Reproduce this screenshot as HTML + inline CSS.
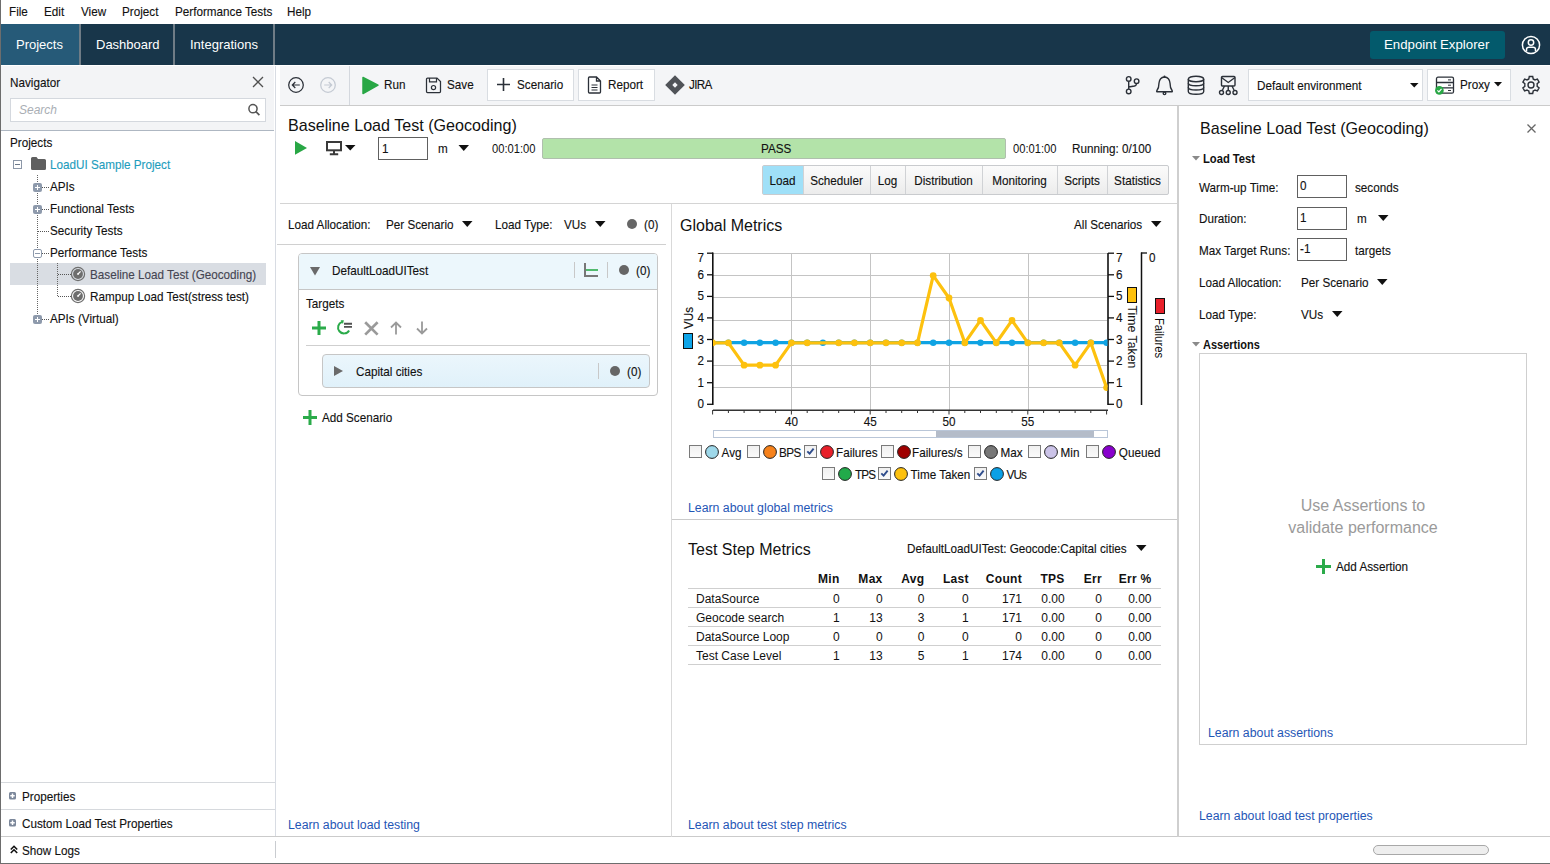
<!DOCTYPE html>
<html><head><meta charset="utf-8">
<style>
*{box-sizing:border-box;margin:0;padding:0}
html,body{width:1550px;height:864px;overflow:hidden;background:#fff;font-family:"Liberation Sans",sans-serif;color:#111;font-size:12px}
.a{position:absolute}
.t{position:absolute;white-space:nowrap;line-height:20px;height:20px}
.hl{position:absolute;height:1px}
.vl{position:absolute;width:1px}
.lnk{color:#1f56b6}
svg{position:absolute;overflow:visible}
.t[style*="font-size:11.7px"]{transform:scaleY(1.12);transform-origin:0 14px;-webkit-text-stroke:0.12px currentColor}
</style></head><body>
<!-- outer left border -->
<div class="a" style="left:0;top:0;width:1px;height:864px;background:#6d6d6d"></div>
<!-- MENU -->
<div class="t" style="left:9px;top:2px;font-size:11.7px">File</div>
<div class="t" style="left:44px;top:2px;font-size:11.7px">Edit</div>
<div class="t" style="left:81px;top:2px;font-size:11.7px">View</div>
<div class="t" style="left:122px;top:2px;font-size:11.7px">Project</div>
<div class="t" style="left:175px;top:2px;font-size:11.7px">Performance Tests</div>
<div class="t" style="left:287px;top:2px;font-size:11.7px">Help</div>
<!-- NAV BAR -->
<div class="a" style="left:1px;top:24px;width:1549px;height:41px;background:#18364a"></div>
<div class="a" style="left:1px;top:24px;width:78px;height:41px;background:#265a78"></div>
<div class="a" style="left:79px;top:24px;width:2px;height:41px;background:#6f7c86"></div>
<div class="a" style="left:173px;top:24px;width:2px;height:41px;background:#6f7c86"></div>
<div class="a" style="left:273px;top:24px;width:2px;height:41px;background:#6f7c86"></div>
<div class="t" style="left:16px;top:35px;font-size:13px;color:#fff">Projects</div>
<div class="t" style="left:96px;top:35px;font-size:13px;color:#fff">Dashboard</div>
<div class="t" style="left:190px;top:35px;font-size:13px;color:#fff">Integrations</div>
<div class="a" style="left:1370px;top:31px;width:135px;height:28px;background:#035a6c;border-radius:3px"></div>
<div class="t" style="left:1384px;top:35px;font-size:13.25px;color:#fff">Endpoint Explorer</div>

<!-- LEFT PANEL -->
<div class="a" style="left:1px;top:66px;width:273px;height:64px;background:#f3f4f6"></div>
<div class="hl" style="left:1px;top:130px;width:273px;background:#aeb7c2;height:1px"></div>
<div class="vl" style="left:275px;top:66px;height:771px;background:#d8dce3;width:1px"></div>
<div class="t" style="left:10px;top:73px;font-size:11.7px">Navigator</div>
<div class="a" style="left:10px;top:98px;width:256px;height:24px;background:#fff;border:1px solid #d4d8de"></div>
<div class="t" style="left:19px;top:100px;font-size:12px;color:#a9aeb4;font-style:italic">Search</div>


<svg style="left:252px;top:76px" width="12" height="12"><path d="M1 1 L11 11 M11 1 L1 11" stroke="#505050" stroke-width="1.3"/></svg>
<svg style="left:247px;top:103px" width="14" height="14"><circle cx="6" cy="5.7" r="4.1" fill="none" stroke="#555" stroke-width="1.5"/><path d="M8.9 8.6 L12.4 12.1" stroke="#555" stroke-width="1.7"/></svg>
<!-- TOOLBAR -->
<div class="a" style="left:280px;top:66px;width:1270px;height:39px;background:#f4f5f7"></div>
<div class="hl" style="left:280px;top:105px;width:1270px;background:#cbcbcb;height:1px"></div>


<!-- TREE -->
<div class="t" style="left:10px;top:133px;font-size:11.7px">Projects</div>
<div class="a" style="left:13px;top:160px;width:9px;height:9px;border:1px solid #8c97a8;background:#fff"></div>
<div class="a" style="left:15px;top:164px;width:5px;height:1px;background:#6c788a"></div>
<svg style="left:31px;top:157px" width="15" height="13"><path d="M0 1.5 Q0 0 1.5 0 H5.5 L7 2 H13.5 Q15 2 15 3.5 V11.5 Q15 13 13.5 13 H1.5 Q0 13 0 11.5Z" fill="#5f5f5f"/></svg>
<div class="t" style="left:50px;top:155px;font-size:11.7px;color:#1d9dbd">LoadUI Sample Project</div>
<!-- dotted lines -->
<div class="a" style="left:10px;top:263px;width:256px;height:22px;background:#d9dde3"></div>

<div class="a" style="left:37px;top:175px;width:1px;height:144px;background:repeating-linear-gradient(to bottom,#666 0 1px,transparent 1px 2px)"></div>
<div class="a" style="left:57px;top:263px;width:1px;height:34px;background:repeating-linear-gradient(to bottom,#666 0 1px,transparent 1px 2px)"></div>
<div class="a" style="left:38px;top:187px;width:12px;height:1px;background:repeating-linear-gradient(to right,#555 0 1px,transparent 1px 2px)"></div>
<div class="a" style="left:33px;top:183px;width:9px;height:9px;border-radius:2px;background:#8e9aac"></div><div class="a" style="left:35px;top:187px;width:5px;height:1px;background:#fff"></div><div class="a" style="left:37px;top:185px;width:1px;height:5px;background:#fff"></div>
<div class="t" style="left:50px;top:177px;font-size:11.7px">APIs</div>
<div class="a" style="left:38px;top:209px;width:12px;height:1px;background:repeating-linear-gradient(to right,#555 0 1px,transparent 1px 2px)"></div>
<div class="a" style="left:33px;top:205px;width:9px;height:9px;border-radius:2px;background:#8e9aac"></div><div class="a" style="left:35px;top:209px;width:5px;height:1px;background:#fff"></div><div class="a" style="left:37px;top:207px;width:1px;height:5px;background:#fff"></div>
<div class="t" style="left:50px;top:199px;font-size:11.7px">Functional Tests</div>
<div class="a" style="left:38px;top:231px;width:12px;height:1px;background:repeating-linear-gradient(to right,#555 0 1px,transparent 1px 2px)"></div>
<div class="t" style="left:50px;top:221px;font-size:11.7px">Security Tests</div>
<div class="a" style="left:38px;top:253px;width:12px;height:1px;background:repeating-linear-gradient(to right,#555 0 1px,transparent 1px 2px)"></div>
<div class="a" style="left:33px;top:249px;width:9px;height:9px;border-radius:2px;border:1px solid #8e9aac;background:#fff"></div><div class="a" style="left:35px;top:253px;width:5px;height:1px;background:#8e9aac"></div>
<div class="t" style="left:50px;top:243px;font-size:11.7px">Performance Tests</div>
<div class="a" style="left:38px;top:319px;width:12px;height:1px;background:repeating-linear-gradient(to right,#555 0 1px,transparent 1px 2px)"></div>
<div class="a" style="left:33px;top:315px;width:9px;height:9px;border-radius:2px;background:#8e9aac"></div><div class="a" style="left:35px;top:319px;width:5px;height:1px;background:#fff"></div><div class="a" style="left:37px;top:317px;width:1px;height:5px;background:#fff"></div>
<div class="t" style="left:50px;top:309px;font-size:11.7px">APIs (Virtual)</div>
<div class="a" style="left:57px;top:263px;width:1px;height:34px;background:repeating-linear-gradient(to bottom,#666 0 1px,transparent 1px 2px)"></div>
<div class="a" style="left:58px;top:274px;width:13px;height:1px;background:repeating-linear-gradient(to right,#555 0 1px,transparent 1px 2px)"></div>
<svg style="left:70px;top:266px" width="16" height="16"><circle cx="8" cy="8" r="6.6" fill="none" stroke="#6e6e6e" stroke-width="1.2"/><circle cx="8" cy="8" r="4.9" fill="#6e6e6e"/><path d="M8 8 L10.6 5.4" stroke="#fff" stroke-width="1.2"/><rect x="7.2" y="7.2" width="1.6" height="1.6" fill="#fff"/></svg>
<div class="t" style="left:90px;top:265px;font-size:11.7px;color:#454552">Baseline Load Test (Geocoding)</div>
<div class="a" style="left:58px;top:296px;width:13px;height:1px;background:repeating-linear-gradient(to right,#555 0 1px,transparent 1px 2px)"></div>
<svg style="left:70px;top:288px" width="16" height="16"><circle cx="8" cy="8" r="6.6" fill="none" stroke="#6e6e6e" stroke-width="1.2"/><circle cx="8" cy="8" r="4.9" fill="#6e6e6e"/><path d="M8 8 L10.6 5.4" stroke="#fff" stroke-width="1.2"/><rect x="7.2" y="7.2" width="1.6" height="1.6" fill="#fff"/></svg>
<div class="t" style="left:90px;top:287px;font-size:11.7px;color:#111">Rampup Load Test(stress test)</div>

<!-- bottom left sections -->
<div class="hl" style="left:1px;top:782px;width:274px;background:#d6d9dd"></div>
<div class="hl" style="left:1px;top:809px;width:274px;background:#d6d9dd"></div>
<div class="hl" style="left:1px;top:836px;width:1549px;background:#cbcbcb"></div>
<svg style="left:9px;top:792px" width="7" height="8"><rect x="0" y="0" width="7" height="7.5" rx="1.5" fill="#7b879a"/><path d="M3.5 1.5 V6 M1.3 3.75 H5.7" stroke="#fff" stroke-width="1.5"/></svg>
<div class="t" style="left:22px;top:786.7px;font-size:11.7px">Properties</div>
<svg style="left:9px;top:819.2px" width="7" height="8"><rect x="0" y="0" width="7" height="7.5" rx="1.5" fill="#7b879a"/><path d="M3.5 1.5 V6 M1.3 3.75 H5.7" stroke="#fff" stroke-width="1.5"/></svg>
<div class="t" style="left:22px;top:813.7px;font-size:11.7px">Custom Load Test Properties</div>
<svg style="left:10px;top:845px" width="8" height="9"><path d="M0.8 4.5 L4 1.3 L7.2 4.5 M0.8 8 L4 4.8 L7.2 8" fill="none" stroke="#111" stroke-width="1.6"/></svg>
<div class="t" style="left:22px;top:841px;font-size:11.7px">Show Logs</div>
<div class="vl" style="left:275px;top:841px;height:17px;background:#c9ccd0"></div>
<div class="a" style="left:0;top:863px;width:1550px;height:1px;background:#6d6d6d"></div>

<!-- TOOLBAR ITEMS -->
<svg style="left:288px;top:77px" width="16" height="16"><circle cx="8" cy="8" r="7.3" fill="none" stroke="#2b3038" stroke-width="1.25"/><path d="M11.8 8 H4.3 M7.3 5 L4.3 8 L7.3 11" fill="none" stroke="#2b3038" stroke-width="1.2"/></svg>
<svg style="left:320px;top:77px" width="16" height="16"><circle cx="8" cy="8" r="7.3" fill="none" stroke="#c4cad3" stroke-width="1.25"/><path d="M4.2 8 H11.7 M8.7 5 L11.7 8 L8.7 11" fill="none" stroke="#c4cad3" stroke-width="1.2"/></svg>
<div class="vl" style="left:349px;top:66px;height:39px;background:#d4d8de"></div>
<svg style="left:362px;top:76px" width="17" height="19"><path d="M1 1.5 L16 9.2 L1 17.5 Z" fill="#28a745" stroke="#28a745" stroke-width="1.5" stroke-linejoin="round"/></svg>
<div class="t" style="left:384px;top:75px;font-size:11.7px">Run</div>
<svg style="left:425px;top:77px" width="17" height="17"><path d="M1.5 2 Q1.5 1 2.5 1 H12 L15.5 4.5 V14.5 Q15.5 15.5 14.5 15.5 H2.5 Q1.5 15.5 1.5 14.5Z" fill="none" stroke="#2b3038" stroke-width="1.25"/><path d="M4.5 1 V4.8 H11.5 V1" fill="none" stroke="#2b3038" stroke-width="1.2"/><circle cx="8.5" cy="10.6" r="2.1" fill="none" stroke="#2b3038" stroke-width="1.2"/></svg>
<div class="t" style="left:447px;top:75px;font-size:11.7px">Save</div>
<div class="a" style="left:487px;top:69px;width:87px;height:32px;background:#fff;border:1px solid #d9dde2"></div>
<svg style="left:496px;top:77px" width="15" height="15"><path d="M7.5 1 V14 M1 7.5 H14" stroke="#2b3038" stroke-width="1.6"/></svg>
<div class="t" style="left:517px;top:75px;font-size:11.7px">Scenario</div>
<div class="a" style="left:578px;top:69px;width:77px;height:32px;background:#fff;border:1px solid #d9dde2"></div>
<svg style="left:587px;top:76px" width="15" height="18"><path d="M1.5 2 Q1.5 1 2.5 1 H9.5 L13.5 5 V16 Q13.5 17 12.5 17 H2.5 Q1.5 17 1.5 16Z M9.5 1 V5 H13.5" fill="none" stroke="#2b3038" stroke-width="1.3"/><path d="M4.5 9 H10.5 M4.5 11.5 H10.5 M4.5 14 H10.5" stroke="#2b3038" stroke-width="1"/></svg>
<div class="t" style="left:608px;top:75px;font-size:11.7px">Report</div>
<svg style="left:665px;top:75px" width="20" height="20"><path d="M10 0.2 L19.8 10 L10 19.8 L0.2 10Z" fill="#505358"/><path d="M10 7.3 L12.7 10 L10 12.7 L7.3 10Z" fill="#f4f5f7"/></svg>
<div class="t" style="left:689px;top:75px;font-size:11.7px;letter-spacing:-0.7px">JIRA</div>

<svg style="left:1124px;top:75px" width="17" height="21"><g fill="none" stroke="#2b3038" stroke-width="1.4"><circle cx="4.7" cy="3.9" r="2.3"/><circle cx="12.6" cy="6.2" r="2.3"/><circle cx="4.7" cy="16.4" r="2.3"/><path d="M4.7 6.2 V14.1 M4.7 12 L10.5 11 Q12.4 10.5 12.6 8.5"/></g></svg>
<svg style="left:1155px;top:75px" width="19" height="21"><g fill="none" stroke="#2b3038" stroke-width="1.4"><path d="M9.5 2 Q4.5 2.5 4 8 Q4 13 1.8 15.8 Q1.3 16.8 2.5 16.8 H16.5 Q17.7 16.8 17.2 15.8 Q15 13 15 8 Q14.5 2.5 9.5 2Z"/><circle cx="9.5" cy="18.3" r="1.3"/></g><circle cx="9.5" cy="1.6" r="1" fill="#2b3038"/></svg>
<svg style="left:1187px;top:75px" width="18" height="21"><g fill="none" stroke="#2b3038" stroke-width="1.4"><ellipse cx="9" cy="4" rx="7.7" ry="2.8"/><path d="M1.3 4 V16.5 Q1.3 19.3 9 19.3 Q16.7 19.3 16.7 16.5 V4"/><path d="M1.3 8 Q1.3 10.8 9 10.8 Q16.7 10.8 16.7 8 M1.3 12.2 Q1.3 15 9 15 Q16.7 15 16.7 12.2"/></g></svg>
<svg style="left:1218px;top:75px" width="21" height="21"><g fill="none" stroke="#2b3038" stroke-width="1.4"><rect x="3.5" y="1.5" width="13.5" height="9.5" rx="1"/><path d="M3.5 2.5 L10.25 7.5 L17 2.5"/><path d="M10.25 11 V15.5 M6.5 11 L4.5 15 M14 11 L16 15"/><circle cx="3.5" cy="17.5" r="2"/><circle cx="10.25" cy="17.5" r="2"/><circle cx="17" cy="17.5" r="2"/></g></svg>

<div class="a" style="left:1248px;top:69px;width:175px;height:32px;background:#fff;border:1px solid #d9dde2"></div>
<div class="t" style="left:1257px;top:76px;font-size:11.7px">Default environment</div>
<svg style="left:1410px;top:83px" width="9" height="5"><path d="M0 0 H8.5 L4.25 4.5Z" fill="#111"/></svg>
<div class="a" style="left:1427px;top:69px;width:84px;height:32px;background:#fff;border:1px solid #d9dde2"></div>
<svg style="left:1435px;top:75.5px" width="21" height="20"><g fill="none" stroke="#2b3038" stroke-width="1.3"><rect x="1.5" y="1.2" width="17" height="16" rx="1.5"/><path d="M1.5 6.5 H18.5 M1.5 11.8 H18.5"/><path d="M13 3.9 H16 M13 9.2 H16 M13 14.5 H16" stroke-width="1"/></g><circle cx="4.4" cy="14.4" r="4.3" fill="#28a745"/><path d="M2.4 14.4 L3.9 15.9 L6.5 12.9" fill="none" stroke="#fff" stroke-width="1.2"/></svg>
<div class="t" style="left:1460px;top:75px;font-size:11.7px">Proxy</div>
<svg style="left:1494px;top:82px" width="9" height="5"><path d="M0 0 H8 L4 4.5Z" fill="#111"/></svg>
<svg style="left:1521px;top:75px" width="20" height="20"><path fill="none" stroke="#2b3038" stroke-width="1.4" d="M8.3 1.5 H11.7 L12.2 4 Q13.2 4.4 14 5 L16.4 4.1 L18.1 7.1 L16.1 8.7 Q16.3 10 16.1 11.3 L18.1 12.9 L16.4 15.9 L14 15 Q13.2 15.6 12.2 16 L11.7 18.5 H8.3 L7.8 16 Q6.8 15.6 6 15 L3.6 15.9 L1.9 12.9 L3.9 11.3 Q3.7 10 3.9 8.7 L1.9 7.1 L3.6 4.1 L6 5 Q6.8 4.4 7.8 4Z"/><circle cx="10" cy="10" r="3" fill="none" stroke="#2b3038" stroke-width="1.4"/></svg>
<svg style="left:1521px;top:35px" width="20" height="20"><g fill="none" stroke="#fff" stroke-width="1.5"><circle cx="10" cy="10" r="8.6"/><circle cx="10" cy="7.5" r="2.7"/><path d="M5.5 16.3 V14.5 Q5.5 12.3 8 12.3 H12 Q14.5 12.3 14.5 14.5 V16.3"/></g></svg>

<!-- MAIN HEADER -->
<div class="t" style="left:288px;top:115px;font-size:16.1px;color:#111">Baseline Load Test (Geocoding)</div>
<svg style="left:294px;top:140px" width="14" height="16"><path d="M1 1 L13 7.9 L1 14.8Z" fill="#28a745"/></svg>
<svg style="left:326px;top:141px" width="31" height="15"><g fill="none" stroke="#3a3a3a" stroke-width="2"><rect x="1" y="1" width="14" height="8.3"/><path d="M8 9.3 V12.5 M3.8 13.2 H12.2"/></g><path d="M19 4 H29.5 L24.25 9.6Z" fill="#111"/></svg>
<div class="a" style="left:378px;top:137px;width:50px;height:23px;border:1px solid #606060;background:#fff"></div>
<div class="t" style="left:382px;top:138.5px;font-size:11.7px">1</div>
<div class="t" style="left:438px;top:138.5px;font-size:11.7px">m</div>
<svg style="left:458px;top:145px" width="12" height="7"><path d="M0.5 0 H11 L5.75 6Z" fill="#111"/></svg>
<div class="t" style="left:492px;top:138.5px;font-size:11.2px;transform:scaleY(1.13);transform-origin:0 14px">00:01:00</div>
<div class="a" style="left:542px;top:138px;width:464px;height:21px;background:#b3e3a9;border:1px solid #b0bfae;border-radius:2px"></div>
<div class="t" style="left:761px;top:138.5px;font-size:11.7px">PASS</div>
<div class="t" style="left:1013px;top:138.5px;font-size:11.2px;transform:scaleY(1.13);transform-origin:0 14px">00:01:00</div>
<div class="t" style="left:1072px;top:138.5px;font-size:11.7px">Running: 0/100</div>
<!-- TABS -->
<div class="a" style="left:762px;top:165px;width:407px;height:30px;border:1px solid #c9cbce;border-radius:2px;background:linear-gradient(#fbfbfb,#ececec)"></div>
<div class="a" style="left:763px;top:166px;width:41px;height:28px;background:#9fe0f8"></div>
<div class="t" style="left:762px;width:41px;text-align:center;top:171px;font-size:11.7px">Load</div>
<div class="vl" style="left:803px;top:166px;height:28px;background:#d0d2d5"></div>
<div class="t" style="left:803px;width:67px;text-align:center;top:171px;font-size:11.7px">Scheduler</div>
<div class="vl" style="left:870px;top:166px;height:28px;background:#d0d2d5"></div>
<div class="t" style="left:870px;width:35px;text-align:center;top:171px;font-size:11.7px">Log</div>
<div class="vl" style="left:905px;top:166px;height:28px;background:#d0d2d5"></div>
<div class="t" style="left:905px;width:77px;text-align:center;top:171px;font-size:11.7px">Distribution</div>
<div class="vl" style="left:982px;top:166px;height:28px;background:#d0d2d5"></div>
<div class="t" style="left:982px;width:75px;text-align:center;top:171px;font-size:11.7px">Monitoring</div>
<div class="vl" style="left:1057px;top:166px;height:28px;background:#d0d2d5"></div>
<div class="t" style="left:1057px;width:50px;text-align:center;top:171px;font-size:11.7px">Scripts</div>
<div class="vl" style="left:1107px;top:166px;height:28px;background:#d0d2d5"></div>
<div class="t" style="left:1107px;width:61px;text-align:center;top:171px;font-size:11.7px">Statistics</div>

<div class="hl" style="left:280px;top:203px;width:898px;background:#d4d4d4"></div>
<div class="vl" style="left:1177px;top:106px;height:731px;background:#cfcfcf;width:2px"></div>
<div class="vl" style="left:671px;top:204px;height:633px;background:#d9d9d9"></div>

<!-- LOAD PANE -->
<div class="t" style="left:288px;top:215px;font-size:11.7px">Load Allocation:</div>
<div class="t" style="left:386px;top:215px;font-size:11.7px">Per Scenario</div>
<svg style="left:462px;top:221px" width="11" height="7"><path d="M0 0 H10.5 L5.25 6Z" fill="#111"/></svg>
<div class="t" style="left:495px;top:215px;font-size:11.7px">Load Type:</div>
<div class="t" style="left:564px;top:215px;font-size:11.7px">VUs</div>
<svg style="left:595px;top:221px" width="11" height="7"><path d="M0 0 H10.5 L5.25 6Z" fill="#111"/></svg>
<svg style="left:627px;top:219px" width="10" height="10"><circle cx="5" cy="5" r="5" fill="#666"/></svg>
<div class="t" style="left:644px;top:215px;font-size:11.7px">(0)</div>
<div class="hl" style="left:277px;top:244px;width:389px;background:#d0d0d0"></div>

<div class="a" style="left:298px;top:253px;width:360px;height:143px;border:1px solid #c6c6c6;border-radius:4px;background:#fff"></div>
<div class="a" style="left:299px;top:254px;width:358px;height:36px;border-radius:3px 3px 0 0;background:#ecf7fc;border-bottom:1px solid #c6c6c6"></div>
<svg style="left:310px;top:267px" width="11" height="9"><path d="M0 0 H10 L5 8.5Z" fill="#6a6a6a"/></svg>
<div class="t" style="left:332px;top:261px;font-size:11.7px">DefaultLoadUITest</div>
<div class="vl" style="left:574px;top:262px;height:16px;background:#c8c8c8"></div>
<svg style="left:584px;top:263px" width="15" height="14"><path d="M1 0 V13 H14" fill="none" stroke="#777" stroke-width="2"/><path d="M2 7 H14" stroke="#2bab4a" stroke-width="1.6"/></svg>
<div class="vl" style="left:607px;top:262px;height:16px;background:#c8c8c8"></div>
<svg style="left:619px;top:265px" width="10" height="10"><circle cx="5" cy="5" r="5" fill="#666"/></svg>
<div class="t" style="left:636px;top:261px;font-size:11.7px">(0)</div>
<div class="t" style="left:306px;top:294px;font-size:11.7px">Targets</div>
<svg style="left:311px;top:320px" width="16" height="16"><path d="M8 1 V15 M1 8 H15" stroke="#2bab4a" stroke-width="3"/></svg>
<svg style="left:336px;top:320px" width="18" height="16"><path d="M6.1 1.9 A5.9 5.9 0 1 0 13.1 10.4" fill="none" stroke="#2bab4a" stroke-width="2"/><path d="M4.6 0.3 L7.9 0.3 L6.9 4.0Z" fill="#2bab4a"/><path d="M8 3.8 H16 M8 6.9 H16" stroke="#505050" stroke-width="1.9"/></svg>
<svg style="left:364px;top:321px" width="15" height="15"><path d="M1.2 1.2 L13.6 13.6 M13.6 1.2 L1.2 13.6" stroke="#9a9a9a" stroke-width="2.7"/></svg>
<svg style="left:390px;top:321px" width="12" height="14"><path d="M6 1.5 V13.5 M1 6.5 L6 1.5 L11 6.5" fill="none" stroke="#9a9a9a" stroke-width="1.8"/></svg>
<svg style="left:416px;top:321px" width="12" height="14"><path d="M6 0.5 V12.5 M1 7.5 L6 12.5 L11 7.5" fill="none" stroke="#9a9a9a" stroke-width="1.8"/></svg>
<div class="hl" style="left:306px;top:345px;width:344px;background:#cfcfcf"></div>
<div class="a" style="left:322px;top:354px;width:328px;height:34px;border:1px solid #c6c6c6;border-radius:4px;background:linear-gradient(#ebf6fc,#e0f1fa)"></div>
<svg style="left:334px;top:366px" width="10" height="11"><path d="M0 0 L9 5 L0 10Z" fill="#6a6a6a"/></svg>
<div class="t" style="left:356px;top:362px;font-size:11.7px">Capital cities</div>
<div class="vl" style="left:598px;top:363px;height:16px;background:#c8c8c8"></div>
<svg style="left:610px;top:366px" width="10" height="10"><circle cx="5" cy="5" r="5" fill="#666"/></svg>
<div class="t" style="left:627px;top:362px;font-size:11.7px">(0)</div>
<svg style="left:303px;top:410px" width="14" height="15"><path d="M7 0 V15 M0 7.5 H14" stroke="#2bab4a" stroke-width="3"/></svg>
<div class="t" style="left:322px;top:408px;font-size:11.7px">Add Scenario</div>
<div class="t lnk" style="left:288px;top:814.5px;font-size:12.3px">Learn about load testing</div>
<!-- GLOBAL METRICS -->
<div class="t" style="left:680px;top:215.7px;font-size:16px">Global Metrics</div>
<div class="t" style="left:1074px;top:215px;font-size:11.7px">All Scenarios</div>
<svg style="left:1151px;top:221px" width="11" height="7"><path d="M0 0 H10.5 L5.25 6Z" fill="#111"/></svg>
<svg style="left:0;top:0" width="1550" height="864"><defs><clipPath id="cp"><rect x="713" y="240" width="394.5" height="180"/></clipPath></defs>
<line x1="713" x2="1107" y1="253.5" y2="253.5" stroke="#c4c4c4" stroke-width="1"/>
<line x1="713" x2="1107" y1="275.5" y2="275.5" stroke="#c4c4c4" stroke-width="1"/>
<line x1="713" x2="1107" y1="297.5" y2="297.5" stroke="#c4c4c4" stroke-width="1"/>
<line x1="713" x2="1107" y1="320.5" y2="320.5" stroke="#c4c4c4" stroke-width="1"/>
<line x1="713" x2="1107" y1="342.5" y2="342.5" stroke="#c4c4c4" stroke-width="1"/>
<line x1="713" x2="1107" y1="365.5" y2="365.5" stroke="#c4c4c4" stroke-width="1"/>
<line x1="713" x2="1107" y1="387.5" y2="387.5" stroke="#c4c4c4" stroke-width="1"/>
<line x1="791.5" x2="791.5" y1="253" y2="410" stroke="#c4c4c4" stroke-width="1"/>
<line x1="870.5" x2="870.5" y1="253" y2="410" stroke="#c4c4c4" stroke-width="1"/>
<line x1="949.5" x2="949.5" y1="253" y2="410" stroke="#c4c4c4" stroke-width="1"/>
<line x1="1028.5" x2="1028.5" y1="253" y2="410" stroke="#c4c4c4" stroke-width="1"/>
<line x1="712.8" x2="712.8" y1="252.5" y2="405" stroke="#111" stroke-width="1.6"/>
<line x1="707" x2="713" y1="404.3" y2="404.3" stroke="#111" stroke-width="1.3"/>
<line x1="707" x2="713" y1="382.7" y2="382.7" stroke="#111" stroke-width="1.3"/>
<line x1="707" x2="713" y1="361.1" y2="361.1" stroke="#111" stroke-width="1.3"/>
<line x1="707" x2="713" y1="339.5" y2="339.5" stroke="#111" stroke-width="1.3"/>
<line x1="707" x2="713" y1="317.9" y2="317.9" stroke="#111" stroke-width="1.3"/>
<line x1="707" x2="713" y1="296.4" y2="296.4" stroke="#111" stroke-width="1.3"/>
<line x1="707" x2="713" y1="274.8" y2="274.8" stroke="#111" stroke-width="1.3"/>
<line x1="707" x2="713" y1="253.2" y2="253.2" stroke="#111" stroke-width="1.3"/>
<line x1="713" x2="1108" y1="410.3" y2="410.3" stroke="#333" stroke-width="1.5"/>
<line x1="712.6" x2="712.6" y1="410" y2="414.5" stroke="#333" stroke-width="1"/>
<line x1="728.4" x2="728.4" y1="410" y2="413" stroke="#333" stroke-width="1"/>
<line x1="744.1" x2="744.1" y1="410" y2="413" stroke="#333" stroke-width="1"/>
<line x1="759.9" x2="759.9" y1="410" y2="413" stroke="#333" stroke-width="1"/>
<line x1="775.6" x2="775.6" y1="410" y2="413" stroke="#333" stroke-width="1"/>
<line x1="791.4" x2="791.4" y1="410" y2="414.5" stroke="#333" stroke-width="1"/>
<line x1="807.2" x2="807.2" y1="410" y2="413" stroke="#333" stroke-width="1"/>
<line x1="822.9" x2="822.9" y1="410" y2="413" stroke="#333" stroke-width="1"/>
<line x1="838.7" x2="838.7" y1="410" y2="413" stroke="#333" stroke-width="1"/>
<line x1="854.4" x2="854.4" y1="410" y2="413" stroke="#333" stroke-width="1"/>
<line x1="870.2" x2="870.2" y1="410" y2="414.5" stroke="#333" stroke-width="1"/>
<line x1="886.0" x2="886.0" y1="410" y2="413" stroke="#333" stroke-width="1"/>
<line x1="901.7" x2="901.7" y1="410" y2="413" stroke="#333" stroke-width="1"/>
<line x1="917.5" x2="917.5" y1="410" y2="413" stroke="#333" stroke-width="1"/>
<line x1="933.2" x2="933.2" y1="410" y2="413" stroke="#333" stroke-width="1"/>
<line x1="949.0" x2="949.0" y1="410" y2="414.5" stroke="#333" stroke-width="1"/>
<line x1="964.8" x2="964.8" y1="410" y2="413" stroke="#333" stroke-width="1"/>
<line x1="980.5" x2="980.5" y1="410" y2="413" stroke="#333" stroke-width="1"/>
<line x1="996.3" x2="996.3" y1="410" y2="413" stroke="#333" stroke-width="1"/>
<line x1="1012.0" x2="1012.0" y1="410" y2="413" stroke="#333" stroke-width="1"/>
<line x1="1027.8" x2="1027.8" y1="410" y2="414.5" stroke="#333" stroke-width="1"/>
<line x1="1043.6" x2="1043.6" y1="410" y2="413" stroke="#333" stroke-width="1"/>
<line x1="1059.3" x2="1059.3" y1="410" y2="413" stroke="#333" stroke-width="1"/>
<line x1="1075.1" x2="1075.1" y1="410" y2="413" stroke="#333" stroke-width="1"/>
<line x1="1090.8" x2="1090.8" y1="410" y2="413" stroke="#333" stroke-width="1"/>
<line x1="1106.6" x2="1106.6" y1="410" y2="414.5" stroke="#333" stroke-width="1"/>
<line x1="1108" x2="1108" y1="253" y2="405" stroke="#111" stroke-width="1.6"/>
<line x1="1108" x2="1114" y1="404.3" y2="404.3" stroke="#111" stroke-width="1.3"/>
<line x1="1108" x2="1114" y1="382.7" y2="382.7" stroke="#111" stroke-width="1.3"/>
<line x1="1108" x2="1114" y1="361.1" y2="361.1" stroke="#111" stroke-width="1.3"/>
<line x1="1108" x2="1114" y1="339.5" y2="339.5" stroke="#111" stroke-width="1.3"/>
<line x1="1108" x2="1114" y1="317.9" y2="317.9" stroke="#111" stroke-width="1.3"/>
<line x1="1108" x2="1114" y1="296.4" y2="296.4" stroke="#111" stroke-width="1.3"/>
<line x1="1108" x2="1114" y1="274.8" y2="274.8" stroke="#111" stroke-width="1.3"/>
<line x1="1108" x2="1114" y1="253.2" y2="253.2" stroke="#111" stroke-width="1.3"/>
<line x1="1141.5" x2="1141.5" y1="252.5" y2="405" stroke="#111" stroke-width="1.5"/>
<line x1="1141" x2="1147" y1="253" y2="253" stroke="#111" stroke-width="1.3"/>
<g clip-path="url(#cp)"><line x1="713" x2="1107" y1="342.6" y2="342.6" stroke="#0fa3e3" stroke-width="3.2"/>
<circle cx="728.4" cy="342.8" r="3.2" fill="#0fa3e3"/>
<circle cx="744.1" cy="342.8" r="3.2" fill="#0fa3e3"/>
<circle cx="759.9" cy="342.8" r="3.2" fill="#0fa3e3"/>
<circle cx="775.6" cy="342.8" r="3.2" fill="#0fa3e3"/>
<circle cx="791.4" cy="342.8" r="3.2" fill="#0fa3e3"/>
<circle cx="807.2" cy="342.8" r="3.2" fill="#0fa3e3"/>
<circle cx="822.9" cy="342.8" r="3.2" fill="#0fa3e3"/>
<circle cx="838.7" cy="342.8" r="3.2" fill="#0fa3e3"/>
<circle cx="854.4" cy="342.8" r="3.2" fill="#0fa3e3"/>
<circle cx="870.2" cy="342.8" r="3.2" fill="#0fa3e3"/>
<circle cx="886.0" cy="342.8" r="3.2" fill="#0fa3e3"/>
<circle cx="901.7" cy="342.8" r="3.2" fill="#0fa3e3"/>
<circle cx="917.5" cy="342.8" r="3.2" fill="#0fa3e3"/>
<circle cx="933.2" cy="342.8" r="3.2" fill="#0fa3e3"/>
<circle cx="949.0" cy="342.8" r="3.2" fill="#0fa3e3"/>
<circle cx="964.8" cy="342.8" r="3.2" fill="#0fa3e3"/>
<circle cx="980.5" cy="342.8" r="3.2" fill="#0fa3e3"/>
<circle cx="996.3" cy="342.8" r="3.2" fill="#0fa3e3"/>
<circle cx="1012.0" cy="342.8" r="3.2" fill="#0fa3e3"/>
<circle cx="1027.8" cy="342.8" r="3.2" fill="#0fa3e3"/>
<circle cx="1043.6" cy="342.8" r="3.2" fill="#0fa3e3"/>
<circle cx="1059.3" cy="342.8" r="3.2" fill="#0fa3e3"/>
<circle cx="1075.1" cy="342.8" r="3.2" fill="#0fa3e3"/>
<circle cx="1090.8" cy="342.8" r="3.2" fill="#0fa3e3"/>
<circle cx="1106.6" cy="342.8" r="3.2" fill="#0fa3e3"/>
<polyline points="712.6,342.8 728.4,342.8 744.1,365.2 759.9,365.2 775.6,365.2 791.4,342.8 807.2,342.8 838.7,342.8 854.4,342.8 870.2,342.8 886.0,342.8 901.7,342.8 917.5,342.8 933.2,275.6 949.0,298.0 964.8,342.8 980.5,320.4 996.3,342.8 1012.0,320.4 1027.8,342.8 1043.6,342.8 1059.3,342.8 1075.1,365.2 1090.8,342.8 1106.6,387.6" fill="none" stroke="#fdc10e" stroke-width="3.2" stroke-linejoin="round"/>
<circle cx="728.4" cy="342.8" r="3.4" fill="#fdc10e"/>
<circle cx="744.1" cy="365.2" r="3.4" fill="#fdc10e"/>
<circle cx="759.9" cy="365.2" r="3.4" fill="#fdc10e"/>
<circle cx="775.6" cy="365.2" r="3.4" fill="#fdc10e"/>
<circle cx="791.4" cy="342.8" r="3.4" fill="#fdc10e"/>
<circle cx="807.2" cy="342.8" r="3.4" fill="#fdc10e"/>
<circle cx="838.7" cy="342.8" r="3.4" fill="#fdc10e"/>
<circle cx="854.4" cy="342.8" r="3.4" fill="#fdc10e"/>
<circle cx="870.2" cy="342.8" r="3.4" fill="#fdc10e"/>
<circle cx="886.0" cy="342.8" r="3.4" fill="#fdc10e"/>
<circle cx="901.7" cy="342.8" r="3.4" fill="#fdc10e"/>
<circle cx="917.5" cy="342.8" r="3.4" fill="#fdc10e"/>
<circle cx="933.2" cy="275.6" r="3.4" fill="#fdc10e"/>
<circle cx="949.0" cy="298.0" r="3.4" fill="#fdc10e"/>
<circle cx="964.8" cy="342.8" r="3.4" fill="#fdc10e"/>
<circle cx="980.5" cy="320.4" r="3.4" fill="#fdc10e"/>
<circle cx="996.3" cy="342.8" r="3.4" fill="#fdc10e"/>
<circle cx="1012.0" cy="320.4" r="3.4" fill="#fdc10e"/>
<circle cx="1027.8" cy="342.8" r="3.4" fill="#fdc10e"/>
<circle cx="1043.6" cy="342.8" r="3.4" fill="#fdc10e"/>
<circle cx="1059.3" cy="342.8" r="3.4" fill="#fdc10e"/>
<circle cx="1075.1" cy="365.2" r="3.4" fill="#fdc10e"/>
<circle cx="1090.8" cy="342.8" r="3.4" fill="#fdc10e"/>
<circle cx="712.6" cy="342.8" r="3.4" fill="#fdc10e"/><circle cx="1106.6" cy="387.6" r="3.4" fill="#fdc10e"/>
</g>
<rect x="713.5" y="430.5" width="394" height="7" fill="#fff" stroke="#b9c6d8" stroke-width="1"/>
<rect x="936" y="431" width="158" height="6" fill="#b4bcc9"/>
<rect x="683.5" y="333.5" width="9" height="15" fill="#0ea5e9" stroke="#111" stroke-width="1"/>
<rect x="1127.5" y="287.5" width="9" height="15" fill="#fdc10e" stroke="#111" stroke-width="1"/>
<rect x="1155.5" y="298.5" width="9" height="15" fill="#e8202a" stroke="#111" stroke-width="1"/>
</svg>
<div class="t" style="left:695px;width:9px;text-align:right;top:394.3px;font-size:11.7px">0</div>
<div class="t" style="left:1116px;top:394.3px;font-size:11.7px">0</div>
<div class="t" style="left:695px;width:9px;text-align:right;top:372.7px;font-size:11.7px">1</div>
<div class="t" style="left:1116px;top:372.7px;font-size:11.7px">1</div>
<div class="t" style="left:695px;width:9px;text-align:right;top:351.1px;font-size:11.7px">2</div>
<div class="t" style="left:1116px;top:351.1px;font-size:11.7px">2</div>
<div class="t" style="left:695px;width:9px;text-align:right;top:329.5px;font-size:11.7px">3</div>
<div class="t" style="left:1116px;top:329.5px;font-size:11.7px">3</div>
<div class="t" style="left:695px;width:9px;text-align:right;top:307.9px;font-size:11.7px">4</div>
<div class="t" style="left:1116px;top:307.9px;font-size:11.7px">4</div>
<div class="t" style="left:695px;width:9px;text-align:right;top:286.4px;font-size:11.7px">5</div>
<div class="t" style="left:1116px;top:286.4px;font-size:11.7px">5</div>
<div class="t" style="left:695px;width:9px;text-align:right;top:264.8px;font-size:11.7px">6</div>
<div class="t" style="left:1116px;top:264.8px;font-size:11.7px">6</div>
<div class="t" style="left:695px;width:9px;text-align:right;top:248.0px;font-size:11.7px">7</div>
<div class="t" style="left:1116px;top:248.0px;font-size:11.7px">7</div>
<div class="t" style="left:1149px;top:248px;font-size:11.7px">0</div>
<div class="t" style="left:776.4px;width:30px;text-align:center;top:412px;font-size:11.7px">40</div>
<div class="t" style="left:855.2px;width:30px;text-align:center;top:412px;font-size:11.7px">45</div>
<div class="t" style="left:934.0px;width:30px;text-align:center;top:412px;font-size:11.7px">50</div>
<div class="t" style="left:1012.8px;width:30px;text-align:center;top:412px;font-size:11.7px">55</div>
<div class="t" style="left:674px;top:308px;width:30px;text-align:center;font-size:11.7px;transform:rotate(-90deg) scaleY(1.1);transform-origin:50% 50%">VUs</div>
<div class="t" style="left:1097px;top:327px;width:70px;text-align:center;font-size:12.3px;transform:rotate(90deg) scaleY(1.1)">Time Taken</div>
<div class="t" style="left:1135px;top:328px;width:50px;text-align:center;font-size:11.3px;transform:rotate(90deg) scaleY(1.15)">Failures</div>
<div class="a" style="left:689px;top:445.3px;width:13px;height:13px;border:1px solid #7a7a7a;background:linear-gradient(#f0f0f0,#fafafa)"></div>
<svg style="left:705px;top:444.8px" width="14" height="14"><circle cx="7" cy="7" r="6.4" fill="#9ed8ea" stroke="#222" stroke-width="1"/></svg>
<div class="t" style="left:721.6px;top:442.8px;font-size:11.7px">Avg</div>
<div class="a" style="left:747px;top:445.3px;width:13px;height:13px;border:1px solid #7a7a7a;background:linear-gradient(#f0f0f0,#fafafa)"></div>
<svg style="left:763px;top:444.8px" width="14" height="14"><circle cx="7" cy="7" r="6.4" fill="#f7821b" stroke="#222" stroke-width="1"/></svg>
<div class="t" style="left:779px;top:442.8px;font-size:11.7px;letter-spacing:-0.5px">BPS</div>
<div class="a" style="left:804px;top:445.3px;width:13px;height:13px;border:1px solid #7a7a7a;background:linear-gradient(#f0f0f0,#fafafa)"></div>
<svg style="left:804px;top:445.3px" width="13" height="13"><path d="M3.3 6.3 L5.6 8.6 L9.6 3.6" fill="none" stroke="#2f4d8c" stroke-width="1.9"/></svg>
<svg style="left:820px;top:444.8px" width="14" height="14"><circle cx="7" cy="7" r="6.4" fill="#e8202a" stroke="#222" stroke-width="1"/></svg>
<div class="t" style="left:836px;top:442.8px;font-size:11.7px">Failures</div>
<div class="a" style="left:881px;top:445.3px;width:13px;height:13px;border:1px solid #7a7a7a;background:linear-gradient(#f0f0f0,#fafafa)"></div>
<svg style="left:897px;top:444.8px" width="14" height="14"><circle cx="7" cy="7" r="6.4" fill="#a00000" stroke="#222" stroke-width="1"/></svg>
<div class="t" style="left:912px;top:442.8px;font-size:11.7px">Failures/s</div>
<div class="a" style="left:968px;top:445.3px;width:13px;height:13px;border:1px solid #7a7a7a;background:linear-gradient(#f0f0f0,#fafafa)"></div>
<svg style="left:984px;top:444.8px" width="14" height="14"><circle cx="7" cy="7" r="6.4" fill="#777777" stroke="#222" stroke-width="1"/></svg>
<div class="t" style="left:1000.5px;top:442.8px;font-size:11.7px">Max</div>
<div class="a" style="left:1028px;top:445.3px;width:13px;height:13px;border:1px solid #7a7a7a;background:linear-gradient(#f0f0f0,#fafafa)"></div>
<svg style="left:1044px;top:444.8px" width="14" height="14"><circle cx="7" cy="7" r="6.4" fill="#cbc3e8" stroke="#222" stroke-width="1"/></svg>
<div class="t" style="left:1060.6px;top:442.8px;font-size:11.7px">Min</div>
<div class="a" style="left:1086px;top:445.3px;width:13px;height:13px;border:1px solid #7a7a7a;background:linear-gradient(#f0f0f0,#fafafa)"></div>
<svg style="left:1102px;top:444.8px" width="14" height="14"><circle cx="7" cy="7" r="6.4" fill="#8800cc" stroke="#222" stroke-width="1"/></svg>
<div class="t" style="left:1118.8px;top:442.8px;font-size:11.7px">Queued</div>
<div class="a" style="left:822px;top:467.4px;width:13px;height:13px;border:1px solid #7a7a7a;background:linear-gradient(#f0f0f0,#fafafa)"></div>
<svg style="left:838px;top:466.9px" width="14" height="14"><circle cx="7" cy="7" r="6.4" fill="#22aa4a" stroke="#222" stroke-width="1"/></svg>
<div class="t" style="left:855px;top:464.9px;font-size:11.7px;letter-spacing:-0.8px">TPS</div>
<div class="a" style="left:878px;top:467.4px;width:13px;height:13px;border:1px solid #7a7a7a;background:linear-gradient(#f0f0f0,#fafafa)"></div>
<svg style="left:878px;top:467.4px" width="13" height="13"><path d="M3.3 6.3 L5.6 8.6 L9.6 3.6" fill="none" stroke="#2f4d8c" stroke-width="1.9"/></svg>
<svg style="left:894px;top:466.9px" width="14" height="14"><circle cx="7" cy="7" r="6.4" fill="#fdc10e" stroke="#222" stroke-width="1"/></svg>
<div class="t" style="left:910.6px;top:464.9px;font-size:11.7px">Time Taken</div>
<div class="a" style="left:974px;top:467.4px;width:13px;height:13px;border:1px solid #7a7a7a;background:linear-gradient(#f0f0f0,#fafafa)"></div>
<svg style="left:974px;top:467.4px" width="13" height="13"><path d="M3.3 6.3 L5.6 8.6 L9.6 3.6" fill="none" stroke="#2f4d8c" stroke-width="1.9"/></svg>
<svg style="left:990px;top:466.9px" width="14" height="14"><circle cx="7" cy="7" r="6.4" fill="#0aa0e6" stroke="#222" stroke-width="1"/></svg>
<div class="t" style="left:1006.4px;top:464.9px;font-size:11.7px;letter-spacing:-0.8px">VUs</div>
<div class="t lnk" style="left:688px;top:497.5px;font-size:12.3px">Learn about global metrics</div>
<div class="hl" style="left:672px;top:519px;width:505px;background:#cacaca;height:1px"></div>
<div class="t" style="left:688px;top:539.5px;font-size:16px">Test Step Metrics</div>
<div class="t" style="left:907px;top:538.5px;font-size:11.7px">DefaultLoadUITest: Geocode:Capital cities</div>
<svg style="left:1136px;top:545px" width="11" height="7"><path d="M0 0 H10.5 L5.25 6Z" fill="#111"/></svg>
<div class="t" style="left:779.6px;width:60px;text-align:right;top:568.6px;font-size:12px;font-weight:bold;letter-spacing:0.3px">Min</div>
<div class="t" style="left:822.6px;width:60px;text-align:right;top:568.6px;font-size:12px;font-weight:bold;letter-spacing:0.3px">Max</div>
<div class="t" style="left:864.4px;width:60px;text-align:right;top:568.6px;font-size:12px;font-weight:bold;letter-spacing:0.3px">Avg</div>
<div class="t" style="left:908.8px;width:60px;text-align:right;top:568.6px;font-size:12px;font-weight:bold;letter-spacing:0.3px">Last</div>
<div class="t" style="left:962.0px;width:60px;text-align:right;top:568.6px;font-size:12px;font-weight:bold;letter-spacing:0.3px">Count</div>
<div class="t" style="left:1004.7px;width:60px;text-align:right;top:568.6px;font-size:12px;font-weight:bold;letter-spacing:0.3px">TPS</div>
<div class="t" style="left:1042.0px;width:60px;text-align:right;top:568.6px;font-size:12px;font-weight:bold;letter-spacing:0.3px">Err</div>
<div class="t" style="left:1091.5px;width:60px;text-align:right;top:568.6px;font-size:12px;font-weight:bold;letter-spacing:0.3px">Err %</div>
<div class="hl" style="left:688px;top:588px;width:473px;background:#cfcfcf"></div>
<div class="t" style="left:696px;top:588.6px;font-size:12px">DataSource</div>
<div class="t" style="left:779.6px;width:60px;text-align:right;top:588.6px;font-size:12px">0</div>
<div class="t" style="left:822.6px;width:60px;text-align:right;top:588.6px;font-size:12px">0</div>
<div class="t" style="left:864.4px;width:60px;text-align:right;top:588.6px;font-size:12px">0</div>
<div class="t" style="left:908.8px;width:60px;text-align:right;top:588.6px;font-size:12px">0</div>
<div class="t" style="left:962.0px;width:60px;text-align:right;top:588.6px;font-size:12px">171</div>
<div class="t" style="left:1004.7px;width:60px;text-align:right;top:588.6px;font-size:12px">0.00</div>
<div class="t" style="left:1042.0px;width:60px;text-align:right;top:588.6px;font-size:12px">0</div>
<div class="t" style="left:1091.5px;width:60px;text-align:right;top:588.6px;font-size:12px">0.00</div>
<div class="hl" style="left:688px;top:607px;width:473px;background:#cfcfcf"></div>
<div class="t" style="left:696px;top:607.6px;font-size:12px">Geocode search</div>
<div class="t" style="left:779.6px;width:60px;text-align:right;top:607.6px;font-size:12px">1</div>
<div class="t" style="left:822.6px;width:60px;text-align:right;top:607.6px;font-size:12px">13</div>
<div class="t" style="left:864.4px;width:60px;text-align:right;top:607.6px;font-size:12px">3</div>
<div class="t" style="left:908.8px;width:60px;text-align:right;top:607.6px;font-size:12px">1</div>
<div class="t" style="left:962.0px;width:60px;text-align:right;top:607.6px;font-size:12px">171</div>
<div class="t" style="left:1004.7px;width:60px;text-align:right;top:607.6px;font-size:12px">0.00</div>
<div class="t" style="left:1042.0px;width:60px;text-align:right;top:607.6px;font-size:12px">0</div>
<div class="t" style="left:1091.5px;width:60px;text-align:right;top:607.6px;font-size:12px">0.00</div>
<div class="hl" style="left:688px;top:626px;width:473px;background:#cfcfcf"></div>
<div class="t" style="left:696px;top:626.6px;font-size:12px">DataSource Loop</div>
<div class="t" style="left:779.6px;width:60px;text-align:right;top:626.6px;font-size:12px">0</div>
<div class="t" style="left:822.6px;width:60px;text-align:right;top:626.6px;font-size:12px">0</div>
<div class="t" style="left:864.4px;width:60px;text-align:right;top:626.6px;font-size:12px">0</div>
<div class="t" style="left:908.8px;width:60px;text-align:right;top:626.6px;font-size:12px">0</div>
<div class="t" style="left:962.0px;width:60px;text-align:right;top:626.6px;font-size:12px">0</div>
<div class="t" style="left:1004.7px;width:60px;text-align:right;top:626.6px;font-size:12px">0.00</div>
<div class="t" style="left:1042.0px;width:60px;text-align:right;top:626.6px;font-size:12px">0</div>
<div class="t" style="left:1091.5px;width:60px;text-align:right;top:626.6px;font-size:12px">0.00</div>
<div class="hl" style="left:688px;top:645px;width:473px;background:#cfcfcf"></div>
<div class="t" style="left:696px;top:645.6px;font-size:12px">Test Case Level</div>
<div class="t" style="left:779.6px;width:60px;text-align:right;top:645.6px;font-size:12px">1</div>
<div class="t" style="left:822.6px;width:60px;text-align:right;top:645.6px;font-size:12px">13</div>
<div class="t" style="left:864.4px;width:60px;text-align:right;top:645.6px;font-size:12px">5</div>
<div class="t" style="left:908.8px;width:60px;text-align:right;top:645.6px;font-size:12px">1</div>
<div class="t" style="left:962.0px;width:60px;text-align:right;top:645.6px;font-size:12px">174</div>
<div class="t" style="left:1004.7px;width:60px;text-align:right;top:645.6px;font-size:12px">0.00</div>
<div class="t" style="left:1042.0px;width:60px;text-align:right;top:645.6px;font-size:12px">0</div>
<div class="t" style="left:1091.5px;width:60px;text-align:right;top:645.6px;font-size:12px">0.00</div>
<div class="hl" style="left:688px;top:664px;width:473px;background:#cfcfcf"></div>
<div class="t lnk" style="left:688px;top:814.5px;font-size:12.3px">Learn about test step metrics</div>

<!-- RIGHT PANEL -->
<div class="t" style="left:1200px;top:117.7px;font-size:16.1px">Baseline Load Test (Geocoding)</div>
<svg style="left:1527px;top:124px" width="9" height="9"><path d="M0.5 0.5 L8.5 8.5 M8.5 0.5 L0.5 8.5" stroke="#666" stroke-width="1.3"/></svg>
<svg style="left:1192px;top:156px" width="8" height="5"><path d="M0 0 H8 L4 4.5Z" fill="#8a8a8a"/></svg>
<div class="t" style="left:1203px;top:149px;font-size:11.2px;font-weight:bold;transform:scaleY(1.1);transform-origin:0 14px">Load Test</div>
<div class="t" style="left:1199px;top:177.5px;font-size:11.7px">Warm-up Time:</div>
<div class="a" style="left:1297px;top:175px;width:50px;height:23px;border:1px solid #606060;background:#fff"></div>
<div class="t" style="left:1300px;top:176px;font-size:11.7px">0</div>
<div class="t" style="left:1355px;top:177.5px;font-size:11.7px">seconds</div>
<div class="t" style="left:1199px;top:209px;font-size:11.7px">Duration:</div>
<div class="a" style="left:1297px;top:207px;width:50px;height:23px;border:1px solid #606060;background:#fff"></div>
<div class="t" style="left:1300px;top:208px;font-size:11.7px">1</div>
<div class="t" style="left:1357px;top:209px;font-size:11.7px">m</div>
<svg style="left:1378px;top:215px" width="11" height="7"><path d="M0 0 H10.5 L5.25 6Z" fill="#111"/></svg>
<div class="t" style="left:1199px;top:241px;font-size:11.7px">Max Target Runs:</div>
<div class="a" style="left:1297px;top:238px;width:50px;height:23px;border:1px solid #606060;background:#fff"></div>
<div class="t" style="left:1300px;top:239px;font-size:11.7px">-1</div>
<div class="t" style="left:1355px;top:241px;font-size:11.7px">targets</div>
<div class="t" style="left:1199px;top:272.7px;font-size:11.7px">Load Allocation:</div>
<div class="t" style="left:1301px;top:272.7px;font-size:11.7px">Per Scenario</div>
<svg style="left:1377px;top:279px" width="11" height="7"><path d="M0 0 H10.5 L5.25 6Z" fill="#111"/></svg>
<div class="t" style="left:1199px;top:305px;font-size:11.7px">Load Type:</div>
<div class="t" style="left:1301px;top:305px;font-size:11.7px">VUs</div>
<svg style="left:1332px;top:311px" width="11" height="7"><path d="M0 0 H10.5 L5.25 6Z" fill="#111"/></svg>
<svg style="left:1192px;top:342px" width="8" height="5"><path d="M0 0 H8 L4 4.5Z" fill="#8a8a8a"/></svg>
<div class="t" style="left:1203px;top:335px;font-size:11px;font-weight:bold;transform:scaleY(1.12);transform-origin:0 14px">Assertions</div>
<div class="a" style="left:1199px;top:353px;width:328px;height:392px;border:1px solid #cfcfcf;background:#fff"></div>
<div class="t" style="left:1199px;width:328px;text-align:center;top:496px;font-size:16px;color:#9a9a9a">Use Assertions to</div>
<div class="t" style="left:1199px;width:328px;text-align:center;top:517.5px;font-size:16px;color:#9a9a9a">validate performance</div>
<svg style="left:1316px;top:559px" width="15" height="15"><path d="M7.5 0 V15 M0 7.5 H15" stroke="#2bab4a" stroke-width="3"/></svg>
<div class="t" style="left:1336px;top:556.5px;font-size:11.7px">Add Assertion</div>
<div class="t lnk" style="left:1208px;top:723px;font-size:12.3px">Learn about assertions</div>
<div class="t lnk" style="left:1199px;top:806px;font-size:12.3px">Learn about load test properties</div>
<div class="a" style="left:1373px;top:845px;width:116px;height:10px;border:1px solid #a8a8a8;border-radius:5px;background:#eeeeee"></div>
</body></html>
